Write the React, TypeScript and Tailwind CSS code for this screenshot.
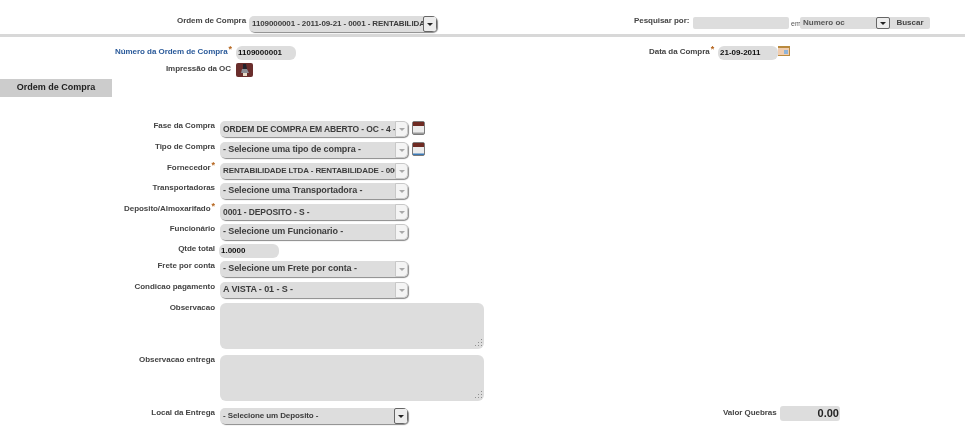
import type { ReactNode } from "react";

const labelClass =
  "text-[8px] leading-[10px] font-bold tracking-[-0.05px] whitespace-nowrap text-[#444444]";
const inputClass =
  "flex h-[14px] w-[60px] items-center rounded-[6px] bg-[#dddddd] pl-[2px] text-[8px] font-bold text-[#111111]";

function Star() {
  return <sup className="top-[-2px] ml-px text-[9px] leading-none font-bold text-[#b5651d]">*</sup>;
}

function Arrow({ dark }: { dark?: boolean }) {
  return (
    <span
      className={
        dark
          ? "flex h-full w-[14px] shrink-0 items-center justify-center rounded-[2px] border border-[#666666] bg-[#ececec]"
          : "flex h-full w-[13px] shrink-0 items-center justify-center rounded-r-[4px] border border-[#c8c8c8] bg-[#f4f4f4]"
      }
    >
      <svg width="6" height="3" viewBox="0 0 6 3">
        <path d="M0 0h6L3 3z" fill={dark ? "#222222" : "#a8a8a8"} />
      </svg>
    </span>
  );
}

function Select({
  text,
  size = "text-[9px]",
  dark,
}: {
  text: string;
  size?: string;
  dark?: boolean;
}) {
  return (
    <div className="flex h-[16px] w-[188px] items-center overflow-hidden rounded-[5px] bg-[#dddddd] shadow-[1px_1px_1px_#8a8a8a]">
      <span
        className={`min-w-0 flex-1 overflow-hidden pl-[3px] font-bold tracking-[-0.1px] whitespace-nowrap text-[#3c3c3c] ${size}`}
      >
        {text}
      </span>
      <Arrow dark={dark} />
    </div>
  );
}

function Row({
  label,
  star,
  className,
  children,
}: {
  label: string;
  star?: boolean;
  className?: string;
  children: ReactNode;
}) {
  return (
    <div className={`flex items-start gap-[5px] ${className ?? ""}`}>
      <div className={`w-[215px] text-right ${labelClass}`}>
        {label}
        {star && <Star />}
      </div>
      {children}
    </div>
  );
}

function CalendarIcon({ blue }: { blue?: boolean }) {
  return (
    <svg width="13" height="14" viewBox="0 0 13 14" className="-ml-px shrink-0">
      <rect x="0.5" y="0.5" width="12" height="13" rx="1.5" fill="#ececec" stroke="#7a7a7a" />
      <rect x="1" y="1" width="11" height="4" fill="#6e2a22" />
      <rect x="1" y="11.5" width="11" height="1.5" fill={blue ? "#3a78b5" : "#9a9a9a"} />
    </svg>
  );
}

function PrintIcon() {
  return (
    <svg width="17" height="14" viewBox="0 0 17 14">
      <rect width="17" height="14" rx="2" fill="#6a2e2c" />
      <path d="M7 1h3l1 5H7z" fill="#23232c" />
      <path d="M6 6h5l2 4H5z" fill="#8d8f96" />
      <rect x="7" y="10" width="4" height="3" fill="#e8dcc8" />
    </svg>
  );
}

function SmallCalendar() {
  return (
    <svg width="12" height="10" viewBox="0 0 12 10" className="shrink-0">
      <rect width="12" height="10" fill="#f0cdb0" />
      <rect width="12" height="2" fill="#b98a3e" />
      <rect x="11" width="1" height="10" fill="#b98a3e" />
      <rect x="6" y="4" width="4" height="4" fill="#8fb4d8" />
      <rect y="9" width="12" height="1" fill="#b98a3e" />
    </svg>
  );
}

function TextArea() {
  return (
    <div className="relative h-[46px] w-[264px] rounded-[6px] bg-[#dddddd]">
      <svg width="10" height="10" viewBox="0 0 10 10" className="absolute right-[1px] bottom-[1px]">
        <path
          d="M8 1h1v1H8zM8 4h1v1H8zM5 4h1v1H5zM8 7h1v1H8zM5 7h1v1H5zM2 7h1v1H2z"
          fill="#8f8f8f"
        />
      </svg>
    </div>
  );
}

export default function App() {
  return (
    <div className="h-[427px] w-[965px] overflow-hidden bg-white font-['Liberation_Sans',Arial,sans-serif] blur-[0.35px]">
      <header className="flex h-[37px] items-start border-b-[3px] border-[#d8d8d8] pt-[16px]">
        <span className={`ml-[177px] w-[67px] ${labelClass}`}>Ordem de Compra</span>
        <div className="ml-[5px]">
          <Select text="1109000001 - 2011-09-21 - 0001 - RENTABILIDADE" size="text-[8px]" dark />
        </div>
        <span className={`ml-[197px] w-[55px] ${labelClass}`}>Pesquisar por:</span>
        <div className="mt-px ml-[4px] h-[12px] w-[96px] rounded-[2px] bg-[#dddddd]" />
        <span className="mt-px ml-[2px] w-[9px] pt-[2px] text-[7px] leading-[10px] text-[#555555]">em</span>
        <div className="mt-px flex h-[12px] w-[90px] items-center rounded-l-[2px] bg-[#dddddd]">
          <span className="flex-1 pl-[3px] text-[8px] font-bold text-[#555555]">Numero oc</span>
          <Arrow dark />
        </div>
        <div className="mt-px flex h-[12px] w-[40px] items-center justify-center rounded-r-[2px] bg-[#dddddd] text-[8px] font-bold text-[#444444]">
          Buscar
        </div>
      </header>

      <div className="mt-[9px] flex items-start">
        <div className="flex w-[236px] justify-end pt-px pr-[4px] text-[8px] leading-[10px] font-bold tracking-[-0.05px] whitespace-nowrap text-[#2a5a9a]">
          <span>
            Número da Ordem de Compra
            <Star />
          </span>
        </div>
        <div className={inputClass}>1109000001</div>
        <span className={`ml-[353px] w-[69px] pt-px ${labelClass}`}>
          Data da Compra
          <Star />
        </span>
        <div className={inputClass}>21-09-2011</div>
        <SmallCalendar />
      </div>

      <div className="mt-[3px] flex items-start">
        <div className={`w-[236px] pt-px pr-[5px] text-right ${labelClass}`}>Impressão da OC</div>
        <PrintIcon />
      </div>

      <div className="mt-[2px] flex h-[18px] w-[112px] items-center justify-center bg-[#cccccc] text-[9px] font-bold text-[#222222]">
        Ordem de Compra
      </div>

      <div className="mt-[24px] flex flex-col">
        <Row label="Fase da Compra">
          <Select text="ORDEM DE COMPRA EM ABERTO - OC - 4 - S" size="text-[8.5px]" />
          <CalendarIcon />
        </Row>
        <Row label="Tipo de Compra" className="mt-[5px]">
          <Select text="- Selecione uma tipo de compra -" />
          <CalendarIcon blue />
        </Row>
        <Row label="Fornecedor" star className="mt-[5px]">
          <Select text="RENTABILIDADE LTDA - RENTABILIDADE - 0001" size="text-[8px]" />
        </Row>
        <Row label="Transportadoras" className="mt-[4px]">
          <Select text="- Selecione uma Transportadora -" />
        </Row>
        <Row label="Deposito/Almoxarifado" star className="mt-[5px]">
          <Select text="0001 - DEPOSITO - S -" size="text-[8.5px]" />
        </Row>
        <Row label="Funcionário" className="mt-[4px]">
          <Select text="- Selecione um Funcionario -" />
        </Row>
        <Row label="Qtde total" className="mt-[4px]">
          <div className={`-ml-px ${inputClass}`}>1.0000</div>
        </Row>
        <Row label="Frete por conta" className="mt-[3px]">
          <Select text="- Selecione um Frete por conta -" />
        </Row>
        <Row label="Condicao pagamento" className="mt-[5px]">
          <Select text="A VISTA - 01 - S -" />
        </Row>
        <Row label="Observacao" className="mt-[5px]">
          <TextArea />
        </Row>
        <Row label="Observacao entrega" className="mt-[6px]">
          <TextArea />
        </Row>
        <div className="mt-[7px] flex items-start">
          <Row label="Local da Entrega">
            <Select text="- Selecione um Deposito -" size="text-[8px]" dark />
          </Row>
          <span className={`ml-[315px] w-[57px] ${labelClass}`}>Valor Quebras</span>
          <div className="-mt-[2px] flex h-[15px] w-[60px] items-center justify-end rounded-[3px] bg-[#dddddd] pr-px text-[11px] font-bold text-[#222222]">
            0.00
          </div>
        </div>
      </div>
    </div>
  );
}
